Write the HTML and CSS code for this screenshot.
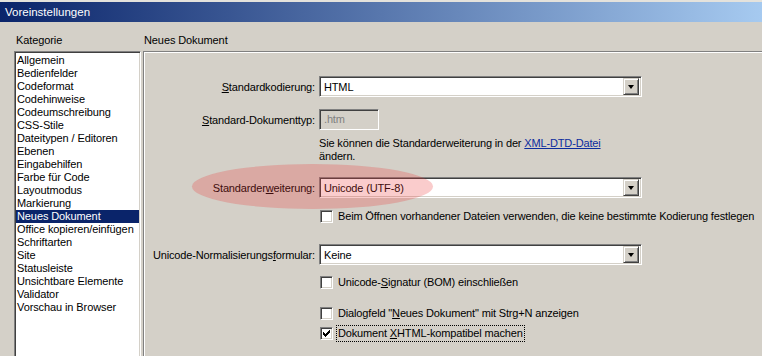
FILE: index.html
```html
<!DOCTYPE html>
<html lang="de">
<head>
  <meta charset="UTF-8">
  <title>Voreinstellungen</title>
  <link rel="stylesheet" href="styles.css">
</head>
<body>
  <div class="titlebar">Voreinstellungen</div>

  <div class="dialog">
    <div class="category">
      <div class="heading">Kategorie</div>
      <ul class="list">
        <li>Allgemein</li>
        <li>Bedienfelder</li>
        <li>Codeformat</li>
        <li>Codehinweise</li>
        <li>Codeumschreibung</li>
        <li>CSS-Stile</li>
        <li>Dateitypen / Editoren</li>
        <li>Ebenen</li>
        <li>Eingabehilfen</li>
        <li>Farbe für Code</li>
        <li>Layoutmodus</li>
        <li>Markierung</li>
        <li class="selected">Neues Dokument</li>
        <li>Office kopieren/einfügen</li>
        <li>Schriftarten</li>
        <li>Site</li>
        <li>Statusleiste</li>
        <li>Unsichtbare Elemente</li>
        <li>Validator</li>
        <li>Vorschau in Browser</li>
      </ul>
    </div>

    <div class="page">
      <div class="heading page-heading">Neues Dokument</div>
      <div class="panel">
        <div class="row row-encoding">
          <label class="label"><u>S</u>tandardkodierung:</label>
          <div class="select"><span class="value">HTML</span><span class="arrow"></span></div>
        </div>

        <div class="row row-doctype">
          <label class="label"><u>S</u>tandard-Dokumenttyp:</label>
          <div class="textbox disabled">.htm</div>
        </div>

        <div class="row row-note">
          <span class="label"></span>
          <p class="note">Sie können die Standarderweiterung in der <a href="#">XML-DTD-Datei</a><br>ändern.</p>
        </div>

        <div class="row row-ext">
          <label class="label">Standarder<u>w</u>eiterung:</label>
          <div class="select"><span class="value">Unicode (UTF-8)</span><span class="arrow"></span></div>
        </div>

        <div class="row row-check1">
          <span class="label"></span>
          <div class="check"><span class="box"></span><span class="text">Beim Öffnen vorhandener Dateien verwenden, die keine bestimmte Kodierung festlegen</span></div>
        </div>

        <div class="row row-norm">
          <label class="label">Unicode-Normalisierungs<u>f</u>ormular:</label>
          <div class="select"><span class="value">Keine</span><span class="arrow"></span></div>
        </div>

        <div class="row row-bom">
          <span class="label"></span>
          <div class="check"><span class="box"></span><span class="text">Unicode-<u>S</u>ignatur (BOM) einschließen</span></div>
        </div>

        <div class="row row-dialog">
          <span class="label"></span>
          <div class="check"><span class="box"></span><span class="text">Dialogfeld "<u>N</u>eues Dokument" mit Strg+N anzeigen</span></div>
        </div>

        <div class="row row-xhtml">
          <span class="label"></span>
          <div class="check"><span class="box checked"><svg width="7" height="7" viewBox="0 0 7 7"><path d="M0 2h1v1h1v1h1v-1h1v-1h1v-1h1v-1h1v3h-1v1h-1v1h-1v1h-1v1h-1v-1h-1v-1h-1z" fill="#000"/></svg></span><span class="text focus">Dokument <u>X</u>HTML-kompatibel machen</span></div>
        </div>
      </div>
    </div>
  </div>

  <div class="highlight"></div>
</body>
</html>
```

FILE: styles.css
```css
* {
  margin: 0;
  padding: 0;
  box-sizing: border-box;
}

body {
  width: 762px;
  height: 356px;
  overflow: hidden;
  background: #d4d0c8;
  font-family: "Liberation Sans", Arial, sans-serif;
  font-size: 11px;
  letter-spacing: -0.1px;
  color: #000;
  position: relative;
}

.titlebar {
  height: 22px;
  border-top: 2px solid #e4e2dc;
  padding: 2px 0 0 5px;
  background: linear-gradient(to right, #0a246a, #a6caf0);
  color: #fff;
  font-size: 11.5px;
  letter-spacing: 0;
  line-height: 17px;
}

.dialog {
  display: flex;
  gap: 2px;
  padding-left: 14px;
}

.heading {
  margin-top: 12px;
  height: 17px;
  line-height: 13px;
  padding-left: 2px;
}

.page-heading {
  padding-left: 1px;
}

.category {
  width: 127px;
  flex: none;
}

.list {
  list-style: none;
  height: 320px;
  background: #fff;
  border: 1px solid;
  border-color: #808080 #fff #fff #808080;
  box-shadow: inset 1px 1px 0 #404040, inset -1px -1px 0 #d4d0c8;
  padding: 2px 1px;
}

.list li {
  height: 13px;
  line-height: 13px;
  padding-left: 1px;
  white-space: nowrap;
}

.list li.selected {
  background: #0a246a;
  color: #fff;
}

.page {
  flex: 1;
}

.panel {
  height: 320px;
  border-top: 1px solid #808080;
  border-left: 1px solid #808080;
  box-shadow: inset 1px 1px 0 #fff;
  padding-top: 1px;
  letter-spacing: -0.15px;
}

.row {
  display: grid;
  grid-template-columns: 171px 1fr;
  column-gap: 4px;
  align-items: center;
}

.label {
  text-align: right;
  white-space: nowrap;
}

.row-encoding { margin-top: 23px; }
.row-doctype { margin-top: 12px; }
.row-note { margin-top: 7px; }
.row-ext { margin-top: 14px; }
.row-check1 { margin-top: 12px; }
.row-norm { margin-top: 21px; }
.row-bom { margin-top: 11px; }
.row-dialog { margin-top: 18px; }
.row-xhtml { margin-top: 7px; }

.select,
.textbox,
.box {
  border: 1px solid;
  border-color: #808080 #fff #fff #808080;
  box-shadow: inset 1px 1px 0 #404040, inset -1px -1px 0 #d4d0c8;
}

.select {
  width: 323px;
  height: 21px;
  background: #fff;
  display: flex;
  align-items: center;
  padding: 2px;
}

.select .value {
  flex: 1;
  padding-left: 2px;
}

.arrow {
  width: 16px;
  height: 17px;
  background: #d4d0c8;
  border: 1px solid;
  border-color: #d4d0c8 #404040 #404040 #d4d0c8;
  box-shadow: inset 1px 1px 0 #fff, inset -1px -1px 0 #808080;
  position: relative;
}

.arrow::after {
  content: "";
  position: absolute;
  left: 4px;
  top: 6px;
  border-left: 3.5px solid transparent;
  border-right: 3.5px solid transparent;
  border-top: 4px solid #000;
}

.textbox {
  width: 60px;
  height: 21px;
  line-height: 19px;
  padding-left: 4px;
}

.textbox.disabled {
  background: #d4d0c8;
  color: #808080;
}

.note {
  line-height: 13px;
}

.note a {
  color: #0b2c9e;
}

.check {
  display: flex;
  align-items: center;
  height: 13px;
  padding-left: 1px;
}

.box {
  width: 13px;
  height: 13px;
  background: #fff;
  display: flex;
  align-items: center;
  justify-content: center;
  flex: none;
}

.check .text {
  margin: -2px 0 -2px 3px;
  padding: 1px;
  border: 1px solid transparent;
  line-height: 13px;
  white-space: nowrap;
}

.check .text.focus {
  border: 1px dotted #000;
}

.highlight {
  position: absolute;
  left: 192px;
  top: 164px;
  width: 241px;
  height: 45px;
  border-radius: 50%;
  background: rgba(235, 50, 50, 0.25);
  pointer-events: none;
}
```
